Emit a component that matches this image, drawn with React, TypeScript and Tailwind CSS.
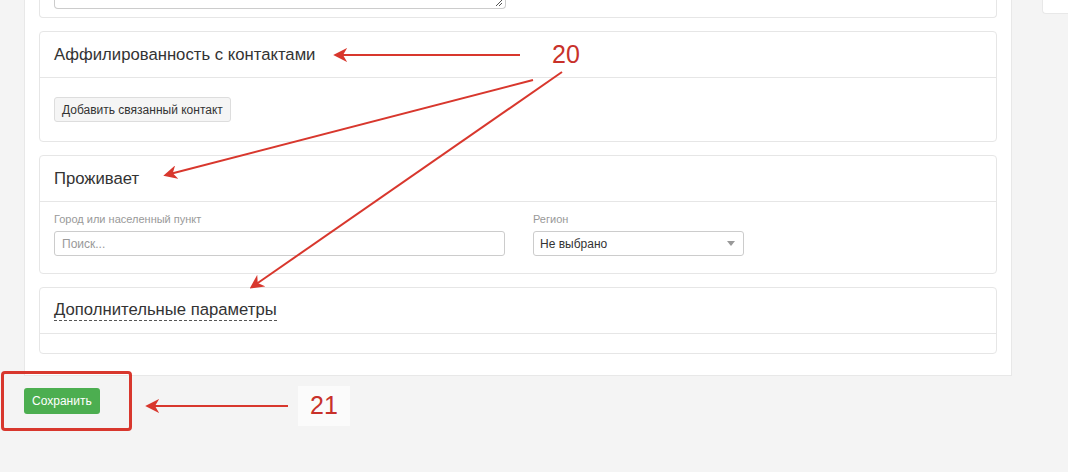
import React from 'react';

const font = { fontFamily: '"Liberation Sans", Arial, sans-serif' };

const Card = ({ title, dashed, children }: { title: string; dashed?: boolean; children?: React.ReactNode }) => (
  <div className="rounded border border-[#e6e6e6] bg-white">
    <div className="h-[46px] flex items-center px-[14px] border-b border-[#e6e6e6]">
      <span
        className={
          dashed
            ? 'text-[16.7px] text-[#333] leading-[20px] border-b border-dashed border-[#555]'
            : 'text-[16.7px] text-[#333] leading-[20px]'
        }
      >
        {title}
      </span>
    </div>
    {children ?? <div className="h-[19px]" />}
  </div>
);

const Arrows = () => (
  <svg className="absolute inset-0 pointer-events-none" width="1068" height="472">
    <defs>
      <marker id="head" viewBox="0 0 10 10" refX="8" refY="5" markerWidth="7" markerHeight="7" orient="auto">
        <path d="M0 0 L10 5 L0 10 L3 5 Z" fill="#d8372d" />
      </marker>
    </defs>
    <g stroke="#d8372d" strokeWidth="2" fill="none">
      <line x1="520" y1="55" x2="336" y2="55" markerEnd="url(#head)" />
      <line x1="533" y1="80" x2="166" y2="175" markerEnd="url(#head)" />
      <line x1="562" y1="72" x2="252" y2="287" markerEnd="url(#head)" />
      <line x1="288" y1="406" x2="148" y2="406" markerEnd="url(#head)" />
    </g>
  </svg>
);

export default function App() {
  return (
    <div className="relative w-[1068px] h-[472px] bg-[#f4f4f4] overflow-hidden" style={font}>
      <div className="flex">
        <div className="ml-[24px] w-[988px]">
          <div className="bg-white border-l border-b border-r border-[#e8e8e8] px-[14px] pb-[21px] flex flex-col gap-[13px]">
            <div className="h-[18px] rounded-b border-l border-r border-b border-[#e6e6e6] px-[14px]">
              <div className="relative w-[452px] h-[9px] border-l border-r border-b border-[#ccc] rounded-b-sm">
                <svg className="absolute right-[2px] bottom-[1px]" width="8" height="8" viewBox="0 0 8 8">
                  <path d="M7 1 L1 7 M7 4 L4 7" stroke="#555" strokeWidth="1" />
                </svg>
              </div>
            </div>
            <Card title="Аффилированность с контактами">
              <div className="flex px-[14px] pt-[19px] pb-[19px]">
                <button className="h-[25px] px-[7px] text-[12px] text-[#333] bg-[#f5f5f5] border border-[#ddd] rounded-[3px]">
                  Добавить связанный контакт
                </button>
              </div>
            </Card>
            <Card title="Проживает">
              <div className="flex gap-[28px] px-[14px] pt-[10px] pb-[17px]">
                <div className="w-[451px]">
                  <div className="text-[11px] text-[#999] leading-[14px] mb-[5px]">Город или населенный пункт</div>
                  <div className="h-[25px] border border-[#ccc] rounded-[3px] flex items-center px-[7px] text-[12px] text-[#999]">
                    Поиск...
                  </div>
                </div>
                <div className="w-[211px]">
                  <div className="text-[11px] text-[#999] leading-[14px] mb-[5px]">Регион</div>
                  <div className="h-[25px] border border-[#ccc] rounded-[3px] flex items-center justify-between px-[6px] text-[12px] text-[#333]">
                    <span>Не выбрано</span>
                    <svg width="8" height="5" viewBox="0 0 8 5" className="mr-[2px]">
                      <path d="M0 0 L8 0 L4 5 Z" fill="#999" />
                    </svg>
                  </div>
                </div>
              </div>
            </Card>
            <Card title="Дополнительные параметры" dashed />
          </div>
          <div className="pt-[12px]">
            <button className="h-[26px] px-[8px] text-[12px] text-white bg-[#4cae50] rounded-[3px]">
              Сохранить
            </button>
          </div>
        </div>
        <div className="ml-[30px] flex-1">
          <div className="h-[14px] bg-white border-l border-b border-[#e8e8e8] rounded-bl" />
        </div>
      </div>

      <div className="absolute left-[1px] top-[371px] w-[131px] h-[60px] border-[3px] border-[#d8372d] rounded-[4px]" />
      <div className="absolute left-[298px] top-[386px] w-[52px] h-[40px] bg-[#fbfbfb] flex items-center justify-center text-[25px] text-[#c8312a]">
        21
      </div>
      <div className="absolute left-[552px] top-[38px] text-[25px] text-[#c8312a] leading-[32px]">20</div>
      <Arrows />
    </div>
  );
}
